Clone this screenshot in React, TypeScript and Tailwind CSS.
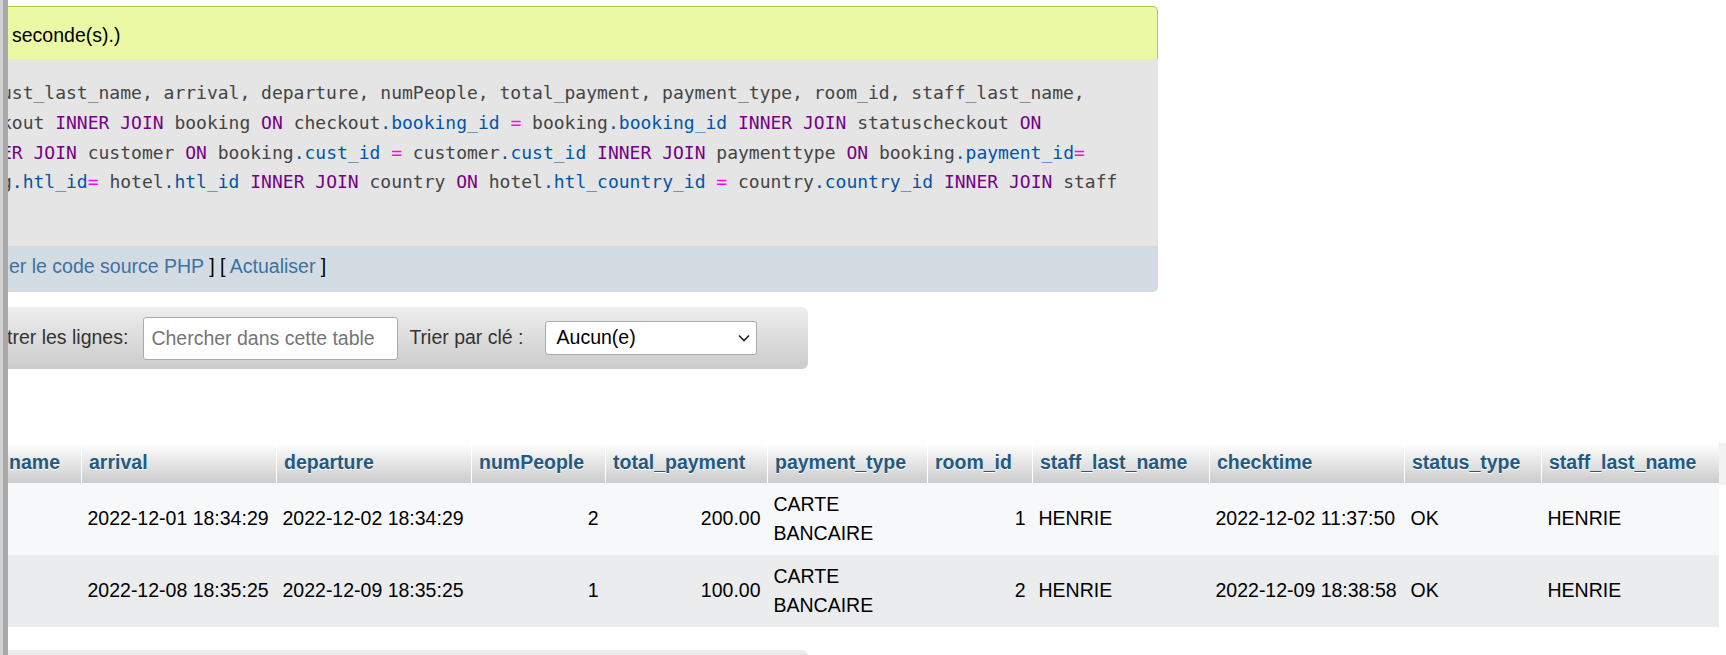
import React from 'react';

type Tok = [string, string];

const D = 'text-[#444444]';
const K = 'text-[#770088]';
const V = 'text-[#0055aa]';
const O = 'text-[#ff00ff]';

// la requête SQL, déjà découpée par couleur
const sqlLines: Tok[][] = [
  [['ust_last_name, arrival, departure, numPeople, total_payment, payment_type, room_id, staff_last_name,', D]],
  [
    ['kout ', D], ['INNER JOIN', K], [' booking ', D], ['ON', K], [' checkout', D], ['.booking_id', V], [' ', D], ['=', O],
    [' booking', D], ['.booking_id', V], [' ', D], ['INNER JOIN', K], [' statuscheckout ', D], ['ON', K],
  ],
  [
    ['ER JOIN', K], [' customer ', D], ['ON', K], [' booking', D], ['.cust_id', V], [' ', D], ['=', O], [' customer', D],
    ['.cust_id', V], [' ', D], ['INNER JOIN', K], [' paymenttype ', D], ['ON', K], [' booking', D], ['.payment_id', V], ['=', O],
  ],
  [
    ['g', D], ['.htl_id', V], ['=', O], [' hotel', D], ['.htl_id', V], [' ', D], ['INNER JOIN', K], [' country ', D], ['ON', K],
    [' hotel', D], ['.htl_country_id', V], [' ', D], ['=', O], [' country', D], ['.country_id', V], [' ', D], ['INNER JOIN', K], [' staff', D],
  ],
];

const headers = [
  'name', 'arrival', 'departure', 'numPeople', 'total_payment', 'payment_type',
  'room_id', 'staff_last_name', 'checktime', 'status_type', 'staff_last_name',
];

const rightCols = [3, 4, 6];

const rows = [
  ['', '2022-12-01 18:34:29', '2022-12-02 18:34:29', '2', '200.00', 'CARTE BANCAIRE', '1', 'HENRIE', '2022-12-02 11:37:50', 'OK', 'HENRIE'],
  ['', '2022-12-08 18:35:25', '2022-12-09 18:35:25', '1', '100.00', 'CARTE BANCAIRE', '2', 'HENRIE', '2022-12-09 18:38:58', 'OK', 'HENRIE'],
];

const grid = 'grid grid-cols-[81px_195px_195px_134px_162px_160px_105px_177px_195px_137px_178px]';

export default function App() {
  return (
    <div className="relative h-[655px] w-[1726px] overflow-hidden bg-white font-['Liberation_Sans',Arial,sans-serif] text-[19.5px] leading-[29.5px] text-black">
      {/* barre de redimensionnement de la navigation */}
      <div className="absolute inset-y-0 left-0 z-10 flex">
        <div className="w-[3px] bg-[#d2d2d2]" />
        <div className="w-[5px] bg-[#a9a9a9]" />
      </div>

      {/* résultat de la requête */}
      <div className="pt-[6px]">
        <div className="w-[1158px]">
          <div className="h-[53px] rounded-tr-[5px] border-t border-r border-[#a2d246] bg-[#ebf8a4] pl-[12px] pt-[14px]">
            seconde(s).)
          </div>
          <div className="h-[187px] bg-[#e5e5e5] pl-[1px] pt-[19px] font-['DejaVu_Sans_Mono',monospace] text-[18px] leading-[29.8px]">
            {sqlLines.map((line, i) => (
              <div key={i} className="whitespace-pre">
                {line.map(([t, c], j) => (
                  <span key={j} className={c}>{t}</span>
                ))}
              </div>
            ))}
          </div>
          <div className="h-[46px] rounded-br-[5px] bg-[#d3dce3] pl-[9px] pt-[6px] whitespace-pre">
            <span className="text-[#3a72a4]">er le code source PHP</span> ] [ <span className="text-[#3a72a4]">Actualiser</span> ]
          </div>
        </div>
      </div>

      {/* filtre */}
      <div className="mt-[15px] flex h-[62px] w-[808px] items-center rounded-r-[6px] bg-linear-to-b from-[#eeeeee] to-[#cbcbcb] text-[#333333]">
        <span className="pl-[7px] whitespace-nowrap">trer les lignes:</span>
        <input
          className="ml-[15px] h-[43px] w-[255px] rounded-[3px] border border-[#aaaaaa] bg-white px-[7px] text-black outline-none placeholder:text-[#757575]"
          placeholder="Chercher dans cette table"
        />
        <span className="ml-[11px] whitespace-nowrap">Trier par clé :</span>
        <div className="ml-[21px] flex h-[34px] w-[212px] items-center justify-between rounded-[3px] border border-[#aaaaaa] bg-white pl-[11px] pr-[5px] text-black">
          <span>Aucun(e)</span>
          <svg width="14" height="14" viewBox="0 0 14 14" fill="none">
            <path d="M2 4.5 L7 9.5 L12 4.5" stroke="#222" strokeWidth="1.6" />
          </svg>
        </div>
      </div>

      {/* table des résultats */}
      <div className="mt-[74px] flex">
        <div>
          <div className={`${grid} h-[40px] bg-linear-to-b from-white to-[#cccccc] font-bold text-[#235a81] [text-shadow:0_1px_0_#fff]`}>
            {headers.map((h, i) =>
              i === 0 ? (
                <div key={i} className="flex items-center justify-end whitespace-nowrap pr-[21px]">
                  {h}
                </div>
              ) : (
                <div key={i} className="flex items-center whitespace-nowrap border-l border-white pl-[7px]">
                  {h}
                </div>
              ),
            )}
          </div>
          {rows.map((r, ri) => (
            <div key={ri} className={`${grid} ${ri % 2 === 0 ? 'bg-[#f7f8fa]' : 'bg-[#ebecee]'}`}>
              {r.map((v, ci) => (
                <div
                  key={ci}
                  className={`flex items-center px-[6.5px] py-[6.5px] ${ci === 5 ? '' : 'whitespace-nowrap'} ${rightCols.includes(ci) ? 'justify-end text-right' : ''}`}
                >
                  <span>{v}</span>
                </div>
              ))}
            </div>
          ))}
        </div>
        <div className="h-[42px] w-[7px] bg-[#f2f2f2]" />
      </div>

      {/* barre de navigation du bas */}
      <div className="mt-[23px] h-[40px] w-[808px] rounded-tr-[6px] bg-linear-to-b from-[#eeeeee] to-[#cbcbcb]" />
    </div>
  );
}
